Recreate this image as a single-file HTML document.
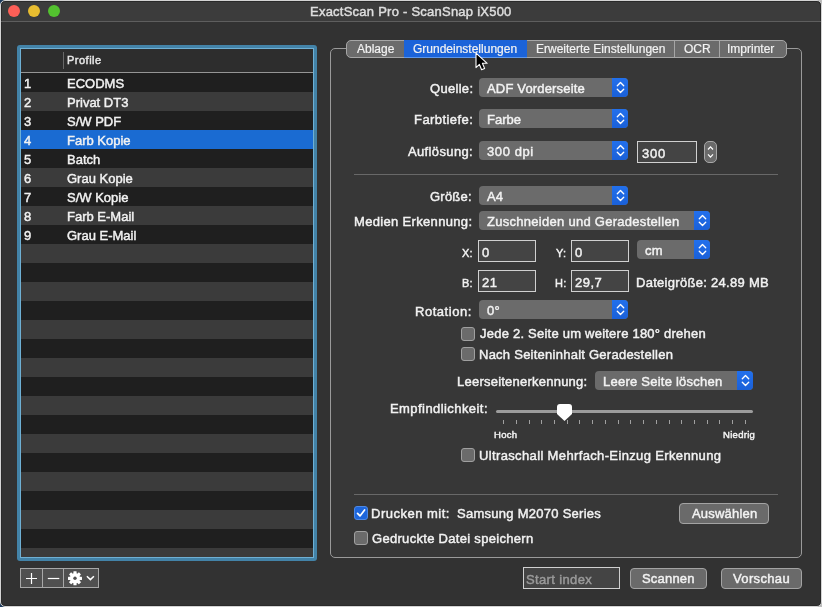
<!DOCTYPE html>
<html><head><meta charset="utf-8"><style>
*{box-sizing:border-box;margin:0;padding:0}
html,body{width:822px;height:607px;overflow:hidden;background:#1c3a5c}
body{font-family:"Liberation Sans",sans-serif;color:#e6e6e6;position:relative}
.t{will-change:transform}
.a{position:absolute}
.t{position:absolute;white-space:nowrap;font-size:13px;line-height:13px;-webkit-text-stroke:0.45px currentColor}
#win{position:absolute;left:0;top:0;width:822px;height:607px;border:1px solid #d4d4d4;border-radius:5px;background:#323232;box-shadow:inset 0 0 0 1px #2a2a2a}
.tl{position:absolute;top:5px;width:12px;height:12px;border-radius:50%}
.pop{position:absolute;height:19px;border-radius:4px;background:#6b6b6b;overflow:hidden}
.pop .bl{position:absolute;right:0;top:0;width:16px;height:19px;background:linear-gradient(#2270ec,#1a60d8)}
.pop .bl svg{position:absolute;left:0;top:0}
.fld{position:absolute;border:1px solid #d0d0d0;background:#444444}
.cb{position:absolute;width:14px;height:14px;border-radius:3px;background:#6b6b6b;border:1px solid #a0a0a0}
.btn{position:absolute;border-radius:4px;background:#6a6a6a;border:1px solid #a3a3a3}
</style></head><body>
<div class="a" style="left:811px;top:0;width:11px;height:607px;background:#bdbdbd"></div>
<div id="win"></div>
<div class="a" style="left:2px;top:2px;width:818px;height:19px;background:#3c3c3c;border-radius:4px 4px 0 0"></div>
<div class="a" style="left:1px;top:21px;width:820px;height:1px;background:#5e5e5e;"></div>
<div class="tl" style="left:8px;background:#fd5f57"></div>
<div class="tl" style="left:28px;background:#e8bd30"></div>
<div class="tl" style="left:48px;background:#53c22f"></div>
<div class="t" style="left:310px;top:5px;font-size:13px;line-height:13px;color:#dedede;letter-spacing:0.24px;">ExactScan Pro - ScanSnap iX500</div>
<div class="a" style="left:17px;top:45px;width:300px;height:516px;border-radius:3px;background:#4383a8"></div>
<div class="a" style="left:20px;top:48px;width:294px;height:510px;border:1px solid #6fb0d4"></div>
<div class="a" style="left:21px;top:49px;width:292px;height:508px;background:#2d2d2d;"></div>
<div class="a" style="left:21px;top:72px;width:292px;height:1px;background:#959595;"></div>
<div class="a" style="left:63px;top:52px;width:1px;height:17px;background:#686868;"></div>
<div class="t" style="left:67px;top:55px;font-size:11px;line-height:11px;color:#e8e8e8;letter-spacing:0.5px;">Profile</div>
<div class="a" style="left:21px;top:73px;width:292px;height:19px;background:#1f1f1f;"></div>
<div class="a" style="left:21px;top:92px;width:292px;height:19px;background:#3b3b3b;"></div>
<div class="a" style="left:21px;top:111px;width:292px;height:19px;background:#1f1f1f;"></div>
<div class="a" style="left:21px;top:130px;width:292px;height:19px;background:#1a6bd2;"></div>
<div class="a" style="left:21px;top:149px;width:292px;height:19px;background:#1f1f1f;"></div>
<div class="a" style="left:21px;top:168px;width:292px;height:19px;background:#3b3b3b;"></div>
<div class="a" style="left:21px;top:187px;width:292px;height:19px;background:#1f1f1f;"></div>
<div class="a" style="left:21px;top:206px;width:292px;height:19px;background:#3b3b3b;"></div>
<div class="a" style="left:21px;top:225px;width:292px;height:19px;background:#1f1f1f;"></div>
<div class="a" style="left:21px;top:244px;width:292px;height:19px;background:#3b3b3b;"></div>
<div class="a" style="left:21px;top:263px;width:292px;height:19px;background:#1f1f1f;"></div>
<div class="a" style="left:21px;top:282px;width:292px;height:19px;background:#3b3b3b;"></div>
<div class="a" style="left:21px;top:301px;width:292px;height:19px;background:#1f1f1f;"></div>
<div class="a" style="left:21px;top:320px;width:292px;height:19px;background:#3b3b3b;"></div>
<div class="a" style="left:21px;top:339px;width:292px;height:19px;background:#1f1f1f;"></div>
<div class="a" style="left:21px;top:358px;width:292px;height:19px;background:#3b3b3b;"></div>
<div class="a" style="left:21px;top:377px;width:292px;height:19px;background:#1f1f1f;"></div>
<div class="a" style="left:21px;top:396px;width:292px;height:19px;background:#3b3b3b;"></div>
<div class="a" style="left:21px;top:415px;width:292px;height:19px;background:#1f1f1f;"></div>
<div class="a" style="left:21px;top:434px;width:292px;height:19px;background:#3b3b3b;"></div>
<div class="a" style="left:21px;top:453px;width:292px;height:19px;background:#1f1f1f;"></div>
<div class="a" style="left:21px;top:472px;width:292px;height:19px;background:#3b3b3b;"></div>
<div class="a" style="left:21px;top:491px;width:292px;height:19px;background:#1f1f1f;"></div>
<div class="a" style="left:21px;top:510px;width:292px;height:19px;background:#3b3b3b;"></div>
<div class="a" style="left:21px;top:529px;width:292px;height:19px;background:#1f1f1f;"></div>
<div class="a" style="left:21px;top:548px;width:292px;height:9px;background:#3b3b3b;"></div>
<div class="t" style="left:24px;top:77px;font-size:13px;line-height:13px;color:#f2f2f2;letter-spacing:0px;">1</div>
<div class="t" style="left:67px;top:77px;font-size:13px;line-height:13px;color:#f2f2f2;letter-spacing:0px;">ECODMS</div>
<div class="t" style="left:24px;top:96px;font-size:13px;line-height:13px;color:#f2f2f2;letter-spacing:0px;">2</div>
<div class="t" style="left:67px;top:96px;font-size:13px;line-height:13px;color:#f2f2f2;letter-spacing:0px;">Privat DT3</div>
<div class="t" style="left:24px;top:115px;font-size:13px;line-height:13px;color:#f2f2f2;letter-spacing:0px;">3</div>
<div class="t" style="left:67px;top:115px;font-size:13px;line-height:13px;color:#f2f2f2;letter-spacing:0px;">S/W PDF</div>
<div class="t" style="left:24px;top:134px;font-size:13px;line-height:13px;color:#f2f2f2;letter-spacing:0px;">4</div>
<div class="t" style="left:67px;top:134px;font-size:13px;line-height:13px;color:#f2f2f2;letter-spacing:0px;">Farb Kopie</div>
<div class="t" style="left:24px;top:153px;font-size:13px;line-height:13px;color:#f2f2f2;letter-spacing:0px;">5</div>
<div class="t" style="left:67px;top:153px;font-size:13px;line-height:13px;color:#f2f2f2;letter-spacing:0px;">Batch</div>
<div class="t" style="left:24px;top:172px;font-size:13px;line-height:13px;color:#f2f2f2;letter-spacing:0px;">6</div>
<div class="t" style="left:67px;top:172px;font-size:13px;line-height:13px;color:#f2f2f2;letter-spacing:0px;">Grau Kopie</div>
<div class="t" style="left:24px;top:191px;font-size:13px;line-height:13px;color:#f2f2f2;letter-spacing:0px;">7</div>
<div class="t" style="left:67px;top:191px;font-size:13px;line-height:13px;color:#f2f2f2;letter-spacing:0px;">S/W Kopie</div>
<div class="t" style="left:24px;top:210px;font-size:13px;line-height:13px;color:#f2f2f2;letter-spacing:0px;">8</div>
<div class="t" style="left:67px;top:210px;font-size:13px;line-height:13px;color:#f2f2f2;letter-spacing:0px;">Farb E-Mail</div>
<div class="t" style="left:24px;top:229px;font-size:13px;line-height:13px;color:#f2f2f2;letter-spacing:0px;">9</div>
<div class="t" style="left:67px;top:229px;font-size:13px;line-height:13px;color:#f2f2f2;letter-spacing:0px;">Grau E-Mail</div>
<div class="a" style="left:20px;top:568px;width:79px;height:20px;border:1px solid #a8a8a8;background:#505050"></div>
<div class="a" style="left:42px;top:568px;width:1px;height:20px;background:#a8a8a8;"></div>
<div class="a" style="left:63px;top:568px;width:1px;height:20px;background:#a8a8a8;"></div>
<svg class="a" style="left:20px;top:568px" width="80" height="21" viewBox="0 0 80 21"><path d="M11.5 5 V16 M6 10.5 H17" stroke="#fff" stroke-width="1.2" fill="none"/><path d="M27.8 10.5 H39.3" stroke="#fff" stroke-width="1.2" fill="none"/><g transform="translate(55 10.3)" fill="#fff"><circle r="5.1"/><rect x="-1.6" y="-7" width="3.2" height="4" rx="0.5" transform="rotate(0)"/><rect x="-1.6" y="-7" width="3.2" height="4" rx="0.5" transform="rotate(45)"/><rect x="-1.6" y="-7" width="3.2" height="4" rx="0.5" transform="rotate(90)"/><rect x="-1.6" y="-7" width="3.2" height="4" rx="0.5" transform="rotate(135)"/><rect x="-1.6" y="-7" width="3.2" height="4" rx="0.5" transform="rotate(180)"/><rect x="-1.6" y="-7" width="3.2" height="4" rx="0.5" transform="rotate(225)"/><rect x="-1.6" y="-7" width="3.2" height="4" rx="0.5" transform="rotate(270)"/><rect x="-1.6" y="-7" width="3.2" height="4" rx="0.5" transform="rotate(315)"/><circle r="1.7" fill="#505050"/></g><path d="M66.9 8.2 L70.4 11.6 L73.9 8.2" stroke="#fff" stroke-width="1.5" fill="none"/></svg>
<div class="a" style="left:330px;top:48px;width:472px;height:510px;border:1px solid #9a9a9a;border-radius:5px;background:#373737"></div>
<div class="a" style="left:346px;top:40px;width:441px;height:18px;border:1px solid #a6a6a6;border-radius:5px;background:#6b6b6b"></div>
<div class="a" style="left:404px;top:40px;width:123px;height:18px;background:#1b63d9;border-bottom:1px solid #5d97ec;box-sizing:border-box"></div>
<div class="a" style="left:674px;top:41px;width:1px;height:16px;background:#a6a6a6;"></div>
<div class="a" style="left:719px;top:41px;width:1px;height:16px;background:#a6a6a6;"></div>
<div class="t" style="left:357px;top:43px;font-size:12px;line-height:12px;color:#f2f2f2;letter-spacing:0px;-webkit-text-stroke-width:0.2px">Ablage</div>
<div class="t" style="left:413px;top:43px;font-size:12px;line-height:12px;color:#f2f2f2;letter-spacing:0px;-webkit-text-stroke-width:0.2px">Grundeinstellungen</div>
<div class="t" style="left:536px;top:43px;font-size:12px;line-height:12px;color:#f2f2f2;letter-spacing:0px;-webkit-text-stroke-width:0.2px">Erweiterte Einstellungen</div>
<div class="t" style="left:684px;top:43px;font-size:12px;line-height:12px;color:#f2f2f2;letter-spacing:0px;-webkit-text-stroke-width:0.2px">OCR</div>
<div class="t" style="left:727px;top:43px;font-size:12px;line-height:12px;color:#f2f2f2;letter-spacing:0px;-webkit-text-stroke-width:0.2px">Imprinter</div>
<svg class="a" style="left:475px;top:52px" width="14" height="20" viewBox="0 0 14 20"><path d="M1 1.2 V15.6 L4.4 12.4 L6.6 17.7 L9.6 16.4 L7.4 11.3 H12.2 Z" fill="#000" stroke="#fff" stroke-width="1.1" stroke-linejoin="round"/></svg>
<div class="t" style="right:348.7px;top:82px;font-size:13px;line-height:13px;color:#f2f2f2;letter-spacing:0.3px;">Quelle:</div>
<div class="pop" style="left:479px;top:78px;width:149px;height:19px"><div class="bl" style="height:19px"><svg width="16" height="19" viewBox="0 0 16 19"><path d="M5.3 7.7 L8.5 4.5 L11.7 7.7 M5.3 11.3 L8.5 14.5 L11.7 11.3" fill="none" stroke="#fff" stroke-width="1.35" stroke-linecap="round" stroke-linejoin="round"/></svg></div></div>
<div class="t" style="left:487px;top:82px;font-size:13px;line-height:13px;color:#f2f2f2;letter-spacing:0.17px;">ADF Vorderseite</div>
<div class="t" style="right:348.56px;top:113px;font-size:13px;line-height:13px;color:#f2f2f2;letter-spacing:0.44px;">Farbtiefe:</div>
<div class="pop" style="left:479px;top:109px;width:149px;height:19px"><div class="bl" style="height:19px"><svg width="16" height="19" viewBox="0 0 16 19"><path d="M5.3 7.7 L8.5 4.5 L11.7 7.7 M5.3 11.3 L8.5 14.5 L11.7 11.3" fill="none" stroke="#fff" stroke-width="1.35" stroke-linecap="round" stroke-linejoin="round"/></svg></div></div>
<div class="t" style="left:487px;top:113px;font-size:13px;line-height:13px;color:#f2f2f2;letter-spacing:0.02px;">Farbe</div>
<div class="t" style="right:348.64px;top:145px;font-size:13px;line-height:13px;color:#f2f2f2;letter-spacing:0.36px;">Auflösung:</div>
<div class="pop" style="left:479px;top:141px;width:149px;height:19px"><div class="bl" style="height:19px"><svg width="16" height="19" viewBox="0 0 16 19"><path d="M5.3 7.7 L8.5 4.5 L11.7 7.7 M5.3 11.3 L8.5 14.5 L11.7 11.3" fill="none" stroke="#fff" stroke-width="1.35" stroke-linecap="round" stroke-linejoin="round"/></svg></div></div>
<div class="t" style="left:487px;top:145px;font-size:13px;line-height:13px;color:#f2f2f2;letter-spacing:0.6px;">300 dpi</div>
<div class="fld" style="left:637px;top:141px;width:60px;height:22px"></div>
<div class="t" style="left:642px;top:147px;font-size:13px;line-height:13px;color:#f2f2f2;letter-spacing:0.8px;">300</div>
<div class="a" style="left:704px;top:141px;width:13px;height:22px;border:1px solid #a8a8a8;border-radius:5px;background:#6a6a6a"></div>
<svg class="a" style="left:704px;top:141px" width="13" height="22" viewBox="0 0 13 22"><path d="M4 8.5 L6.5 5.8 L9 8.5 M4 13.4 L6.5 16.2 L9 13.4" fill="none" stroke="#fff" stroke-width="1.2"/></svg>
<div class="a" style="left:354px;top:174px;width:424px;height:1px;background:#686868;"></div>
<div class="t" style="right:349.78px;top:190px;font-size:13px;line-height:13px;color:#f2f2f2;letter-spacing:0.22px;">Größe:</div>
<div class="pop" style="left:479px;top:186px;width:149px;height:19px"><div class="bl" style="height:19px"><svg width="16" height="19" viewBox="0 0 16 19"><path d="M5.3 7.7 L8.5 4.5 L11.7 7.7 M5.3 11.3 L8.5 14.5 L11.7 11.3" fill="none" stroke="#fff" stroke-width="1.35" stroke-linecap="round" stroke-linejoin="round"/></svg></div></div>
<div class="t" style="left:487px;top:190px;font-size:13px;line-height:13px;color:#f2f2f2;letter-spacing:0.2px;">A4</div>
<div class="t" style="right:349.67px;top:215px;font-size:13px;line-height:13px;color:#f2f2f2;letter-spacing:0.33px;">Medien Erkennung:</div>
<div class="pop" style="left:479px;top:211px;width:231px;height:19px"><div class="bl" style="height:19px"><svg width="16" height="19" viewBox="0 0 16 19"><path d="M5.3 7.7 L8.5 4.5 L11.7 7.7 M5.3 11.3 L8.5 14.5 L11.7 11.3" fill="none" stroke="#fff" stroke-width="1.35" stroke-linecap="round" stroke-linejoin="round"/></svg></div></div>
<div class="t" style="left:487px;top:215px;font-size:13px;line-height:13px;color:#f2f2f2;letter-spacing:0.28px;">Zuschneiden und Geradestellen</div>
<div class="t" style="right:348.8px;top:248px;font-size:11px;line-height:11px;color:#f2f2f2;letter-spacing:0.2px;">X:</div>
<div class="fld" style="left:478px;top:240px;width:58px;height:22px"></div>
<div class="t" style="left:482px;top:246px;font-size:13px;line-height:13px;color:#f2f2f2;letter-spacing:0.5px;">0</div>
<div class="t" style="right:255.8px;top:248px;font-size:11px;line-height:11px;color:#f2f2f2;letter-spacing:0.2px;">Y:</div>
<div class="fld" style="left:571px;top:240px;width:58px;height:22px"></div>
<div class="t" style="left:575px;top:246px;font-size:13px;line-height:13px;color:#f2f2f2;letter-spacing:0.5px;">0</div>
<div class="pop" style="left:637px;top:240px;width:73px;height:19px"><div class="bl" style="height:19px"><svg width="16" height="19" viewBox="0 0 16 19"><path d="M5.3 7.7 L8.5 4.5 L11.7 7.7 M5.3 11.3 L8.5 14.5 L11.7 11.3" fill="none" stroke="#fff" stroke-width="1.35" stroke-linecap="round" stroke-linejoin="round"/></svg></div></div>
<div class="t" style="left:645px;top:244px;font-size:13px;line-height:13px;color:#f2f2f2;letter-spacing:0.2px;">cm</div>
<div class="t" style="right:348.8px;top:278px;font-size:11px;line-height:11px;color:#f2f2f2;letter-spacing:0.2px;">B:</div>
<div class="fld" style="left:478px;top:270px;width:58px;height:22px"></div>
<div class="t" style="left:482px;top:276px;font-size:13px;line-height:13px;color:#f2f2f2;letter-spacing:0.5px;">21</div>
<div class="t" style="right:255.8px;top:278px;font-size:11px;line-height:11px;color:#f2f2f2;letter-spacing:0.2px;">H:</div>
<div class="fld" style="left:571px;top:270px;width:58px;height:22px"></div>
<div class="t" style="left:575px;top:276px;font-size:13px;line-height:13px;color:#f2f2f2;letter-spacing:0.5px;">29,7</div>
<div class="t" style="left:636px;top:276px;font-size:13px;line-height:13px;color:#f2f2f2;letter-spacing:0.29px;">Dateigröße: 24.89 MB</div>
<div class="t" style="right:350.47px;top:305px;font-size:13px;line-height:13px;color:#f2f2f2;letter-spacing:0.53px;">Rotation:</div>
<div class="pop" style="left:479px;top:300px;width:149px;height:19px"><div class="bl" style="height:19px"><svg width="16" height="19" viewBox="0 0 16 19"><path d="M5.3 7.7 L8.5 4.5 L11.7 7.7 M5.3 11.3 L8.5 14.5 L11.7 11.3" fill="none" stroke="#fff" stroke-width="1.35" stroke-linecap="round" stroke-linejoin="round"/></svg></div></div>
<div class="t" style="left:487px;top:304px;font-size:13px;line-height:13px;color:#f2f2f2;letter-spacing:0.2px;">0°</div>
<div class="cb" style="left:461px;top:327px"></div>
<div class="t" style="left:480px;top:327px;font-size:13px;line-height:13px;color:#f2f2f2;letter-spacing:0.23px;">Jede 2. Seite um weitere 180° drehen</div>
<div class="cb" style="left:461px;top:347px"></div>
<div class="t" style="left:479px;top:348px;font-size:13px;line-height:13px;color:#f2f2f2;letter-spacing:0.25px;">Nach Seiteninhalt Geradestellen</div>
<div class="t" style="left:457px;top:375px;font-size:13px;line-height:13px;color:#f2f2f2;letter-spacing:0.23px;">Leerseitenerkennung:</div>
<div class="pop" style="left:595px;top:371px;width:158px;height:19px"><div class="bl" style="height:19px"><svg width="16" height="19" viewBox="0 0 16 19"><path d="M5.3 7.7 L8.5 4.5 L11.7 7.7 M5.3 11.3 L8.5 14.5 L11.7 11.3" fill="none" stroke="#fff" stroke-width="1.35" stroke-linecap="round" stroke-linejoin="round"/></svg></div></div>
<div class="t" style="left:603px;top:375px;font-size:13px;line-height:13px;color:#f2f2f2;letter-spacing:0.24px;">Leere Seite löschen</div>
<div class="t" style="left:390px;top:402px;font-size:13px;line-height:13px;color:#f2f2f2;letter-spacing:0.43px;">Empfindlichkeit:</div>
<div class="a" style="left:496px;top:410px;width:257px;height:3px;border-radius:2px;background:#9c9c9c"></div>
<div class="a" style="left:503.1px;top:420px;width:1px;height:4px;background:#a0a0a0"></div>
<div class="a" style="left:515.8px;top:420px;width:1px;height:4px;background:#a0a0a0"></div>
<div class="a" style="left:528.5px;top:420px;width:1px;height:4px;background:#a0a0a0"></div>
<div class="a" style="left:541.3px;top:420px;width:1px;height:4px;background:#a0a0a0"></div>
<div class="a" style="left:554.0px;top:420px;width:1px;height:4px;background:#a0a0a0"></div>
<div class="a" style="left:566.7px;top:420px;width:1px;height:4px;background:#a0a0a0"></div>
<div class="a" style="left:579.4px;top:420px;width:1px;height:4px;background:#a0a0a0"></div>
<div class="a" style="left:592.1px;top:420px;width:1px;height:4px;background:#a0a0a0"></div>
<div class="a" style="left:604.9px;top:420px;width:1px;height:4px;background:#a0a0a0"></div>
<div class="a" style="left:617.6px;top:420px;width:1px;height:4px;background:#a0a0a0"></div>
<div class="a" style="left:630.3px;top:420px;width:1px;height:4px;background:#a0a0a0"></div>
<div class="a" style="left:643.0px;top:420px;width:1px;height:4px;background:#a0a0a0"></div>
<div class="a" style="left:655.7px;top:420px;width:1px;height:4px;background:#a0a0a0"></div>
<div class="a" style="left:668.5px;top:420px;width:1px;height:4px;background:#a0a0a0"></div>
<div class="a" style="left:681.2px;top:420px;width:1px;height:4px;background:#a0a0a0"></div>
<div class="a" style="left:693.9px;top:420px;width:1px;height:4px;background:#a0a0a0"></div>
<div class="a" style="left:706.6px;top:420px;width:1px;height:4px;background:#a0a0a0"></div>
<div class="a" style="left:719.3px;top:420px;width:1px;height:4px;background:#a0a0a0"></div>
<div class="a" style="left:732.1px;top:420px;width:1px;height:4px;background:#a0a0a0"></div>
<div class="a" style="left:744.8px;top:420px;width:1px;height:4px;background:#a0a0a0"></div>
<svg class="a" style="left:556px;top:403px" width="17" height="19" viewBox="0 0 17 19"><path d="M4 1 H13 Q16 1 16 4 V11 L8.5 18 L1 11 V4 Q1 1 4 1 Z" fill="#fff"/></svg>
<div class="t" style="left:494px;top:430px;font-size:9.5px;line-height:9.5px;color:#f2f2f2;letter-spacing:0.3px;">Hoch</div>
<div class="t" style="right:66.7px;top:430px;font-size:9.5px;line-height:9.5px;color:#f2f2f2;letter-spacing:0.3px;">Niedrig</div>
<div class="cb" style="left:461px;top:448px"></div>
<div class="t" style="left:479px;top:449px;font-size:13px;line-height:13px;color:#f2f2f2;letter-spacing:0.36px;">Ultraschall Mehrfach-Einzug Erkennung</div>
<div class="a" style="left:354px;top:494px;width:424px;height:1px;background:#686868;"></div>
<div class="a" style="left:354px;top:506px;width:14px;height:14px;border-radius:3px;background:#1d66dc;border:1px solid #4d88e4"><svg width="14" height="14" viewBox="0 0 14 14" style="position:absolute;left:-1px;top:-1px"><path d="M3.5 7.3 L6 9.9 L10.6 3.9" fill="none" stroke="#fff" stroke-width="1.7" stroke-linecap="round" stroke-linejoin="round"/></svg></div>
<div class="t" style="left:371px;top:507px;font-size:13px;line-height:13px;color:#f2f2f2;letter-spacing:0.5px;">Drucken mit:</div>
<div class="t" style="left:457px;top:507px;font-size:13px;line-height:13px;color:#f2f2f2;letter-spacing:0.27px;">Samsung M2070 Series</div>
<div class="btn" style="left:679px;top:503px;width:90px;height:21px"></div>
<div class="t" style="left:692px;top:507px;font-size:13px;line-height:13px;color:#f2f2f2;letter-spacing:0.2px;">Auswählen</div>
<div class="cb" style="left:354px;top:531px"></div>
<div class="t" style="left:372px;top:532px;font-size:13px;line-height:13px;color:#f2f2f2;letter-spacing:0.3px;">Gedruckte Datei speichern</div>
<div class="fld" style="left:523px;top:567px;width:97px;height:22px"></div>
<div class="t" style="left:526px;top:573px;font-size:13px;line-height:13px;color:#9a9a9a;letter-spacing:0.36px;">Start index</div>
<div class="btn" style="left:630px;top:568px;width:77px;height:21px"></div>
<div class="t" style="left:642px;top:572px;font-size:13px;line-height:13px;color:#f2f2f2;letter-spacing:0.2px;">Scannen</div>
<div class="btn" style="left:721px;top:568px;width:81px;height:21px"></div>
<div class="t" style="left:733px;top:572px;font-size:13px;line-height:13px;color:#f2f2f2;letter-spacing:0.35px;">Vorschau</div>
</body></html>
